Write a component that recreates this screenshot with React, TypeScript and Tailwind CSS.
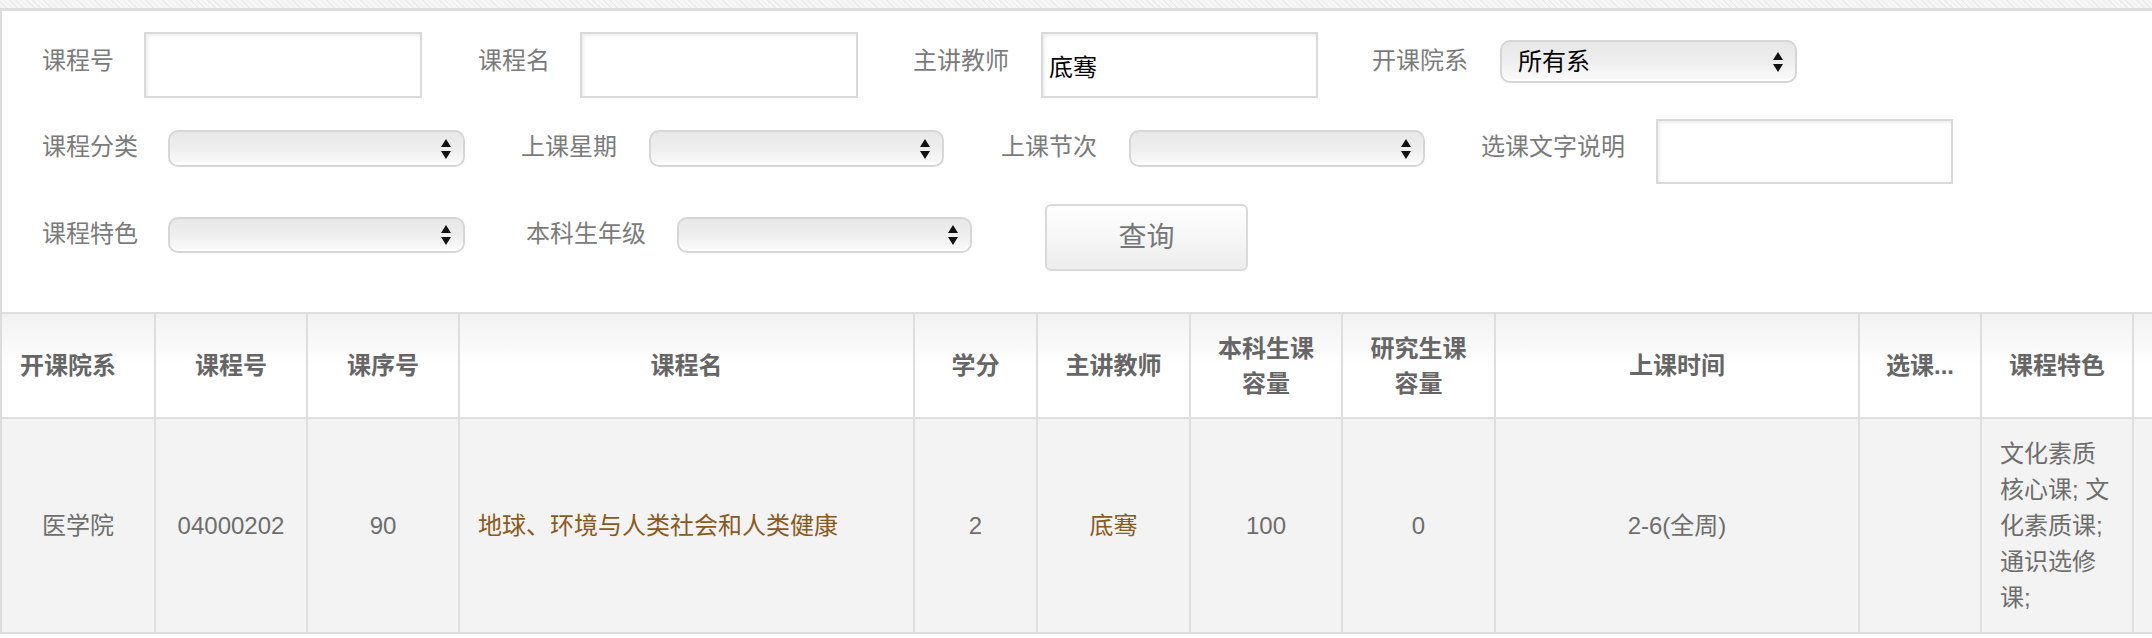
import React from "react";

const font = "font-['Liberation_Sans','Noto_Sans_CJK_SC',sans-serif]";

function Arrows({ className = "" }: { className?: string }) {
  return (
    <svg width="10" height="20" viewBox="0 0 10 20" className={className}>
      <polygon points="0,8 5,0 10,8" fill="#111" />
      <polygon points="0,12 10,12 5,20" fill="#111" />
    </svg>
  );
}

function Select({ className, value }: { className: string; value?: string }) {
  return (
    <div
      className={`flex items-center justify-between rounded-[10px] border-2 border-[#d6d6d6] bg-linear-to-b from-[#e8e8e8] via-[#eeeeee] to-[#fbfbfb] pl-[16px] pr-[12px] shadow-[inset_0_-2px_1px_rgba(255,255,255,0.9)] ${className}`}
    >
      <span className="text-[24px] text-black">{value}</span>
      <Arrows />
    </div>
  );
}

function TextInput({ className, value = "" }: { className: string; value?: string }) {
  return (
    <input
      readOnly
      value={value}
      className={`border-2 border-[#d9d9d9] bg-white pl-[6px] text-[24px] text-black shadow-[inset_2px_2px_3px_rgba(0,0,0,0.07)] outline-none ${className}`}
    />
  );
}

const label = "mb-2 whitespace-nowrap text-[24px] text-[#7b7b7b]";

const headers = [
  "开课院系",
  "课程号",
  "课序号",
  "课程名",
  "学分",
  "主讲教师",
  "本科生课容量",
  "研究生课容量",
  "上课时间",
  "选课...",
  "课程特色",
  "",
];

const brown = "text-[#8a5a1c]";

export default function App() {
  return (
    <div className={`h-[638px] w-full overflow-hidden bg-white ${font}`}>
      <div className="h-[8px] bg-[repeating-linear-gradient(45deg,#ebebeb_0px,#ebebeb_1px,#f6f6f6_1px,#f6f6f6_4px)]" />
      <div className="border-t-[3px] border-l-2 border-[#dcdcdc]">
        <div className="pl-[40px] pt-[21px] pb-[41px]">
          <div className="flex h-[66px] items-center">
            <span className={label}>课程号</span>
            <TextInput className="ml-[30px] h-[66px] w-[278px]" />
            <span className={`${label} ml-[56px]`}>课程名</span>
            <TextInput className="ml-[30px] h-[66px] w-[278px]" />
            <span className={`${label} ml-[55px]`}>主讲教师</span>
            <TextInput className="ml-[32px] h-[66px] w-[277px]" value="底骞" />
            <span className={`${label} ml-[54px]`}>开课院系</span>
            <Select className="mb-[7px] ml-[32px] h-[43px] w-[297px]" value="所有系" />
          </div>
          <div className="mt-5 flex h-[66px] items-center">
            <span className={label}>课程分类</span>
            <Select className="mb-[5px] ml-[30px] h-[37px] w-[297px]" />
            <span className={`${label} ml-[56px]`}>上课星期</span>
            <Select className="mb-[5px] ml-[32px] h-[37px] w-[295px]" />
            <span className={`${label} ml-[57px]`}>上课节次</span>
            <Select className="mb-[5px] ml-[32px] h-[37px] w-[296px]" />
            <span className={`${label} ml-[56px]`}>选课文字说明</span>
            <TextInput className="ml-[31px] h-[65px] w-[297px]" />
          </div>
          <div className="mt-5 flex h-[67px] items-center">
            <span className={label}>课程特色</span>
            <Select className="mb-[5px] ml-[30px] h-[36px] w-[297px]" />
            <span className={`${label} ml-[61px]`}>本科生年级</span>
            <Select className="mb-[5px] ml-[31px] h-[36px] w-[295px]" />
            <button className="ml-[73px] h-[67px] w-[203px] rounded-[6px] border-2 border-[#dadada] bg-linear-to-b from-white to-[#ededed] text-[28px] text-[#777]">
              查询
            </button>
          </div>
        </div>

        <div className="grid w-max grid-cols-[154px_152px_152px_455px_123px_153px_152px_153px_364px_122px_152px_200px] border-t-2 border-[#dedede]">
          {headers.map((h, i) => (
            <div
              key={i}
              className={`flex h-[105px] items-center border-r-2 border-b-2 border-[#dedede] bg-linear-to-b from-[#f1f1f1] via-white to-white px-[18px] text-[24px] leading-[35px] font-bold text-[#666] ${
                i === 0 ? "justify-start" : "justify-center text-center"
              }`}
            >
              {h}
            </div>
          ))}

          <div className="flex h-[215px] items-center justify-center border-r-2 border-b-2 border-[#dedede] bg-[#f3f3f3] text-[24px] text-[#6e6e6e]">
            医学院
          </div>
          <div className="flex h-[215px] items-center justify-center border-r-2 border-b-2 border-[#dedede] bg-[#f3f3f3] text-[24px] text-[#6e6e6e]">
            04000202
          </div>
          <div className="flex h-[215px] items-center justify-center border-r-2 border-b-2 border-[#dedede] bg-[#f3f3f3] text-[24px] text-[#6e6e6e]">
            90
          </div>
          <div className={`flex h-[215px] items-center border-r-2 border-b-2 border-[#dedede] bg-[#f3f3f3] px-[18px] text-[24px] ${brown}`}>
            地球、环境与人类社会和人类健康
          </div>
          <div className="flex h-[215px] items-center justify-center border-r-2 border-b-2 border-[#dedede] bg-[#f3f3f3] text-[24px] text-[#6e6e6e]">
            2
          </div>
          <div className={`flex h-[215px] items-center justify-center border-r-2 border-b-2 border-[#dedede] bg-[#f3f3f3] text-[24px] ${brown}`}>
            底骞
          </div>
          <div className="flex h-[215px] items-center justify-center border-r-2 border-b-2 border-[#dedede] bg-[#f3f3f3] text-[24px] text-[#6e6e6e]">
            100
          </div>
          <div className="flex h-[215px] items-center justify-center border-r-2 border-b-2 border-[#dedede] bg-[#f3f3f3] text-[24px] text-[#6e6e6e]">
            0
          </div>
          <div className="flex h-[215px] items-center justify-center border-r-2 border-b-2 border-[#dedede] bg-[#f3f3f3] text-[24px] text-[#6e6e6e]">
            2-6(全周)
          </div>
          <div className="h-[215px] border-r-2 border-b-2 border-[#dedede] bg-[#f3f3f3]" />
          <div className="flex h-[215px] items-center border-r-2 border-b-2 border-[#dedede] bg-[#f3f3f3] px-[18px] text-[24px] leading-[36px] text-[#6e6e6e]">
            文化素质核心课; 文化素质课; 通识选修课;
          </div>
          <div className="h-[215px] border-r-2 border-b-2 border-[#dedede] bg-[#f3f3f3]" />
        </div>
      </div>
    </div>
  );
}
